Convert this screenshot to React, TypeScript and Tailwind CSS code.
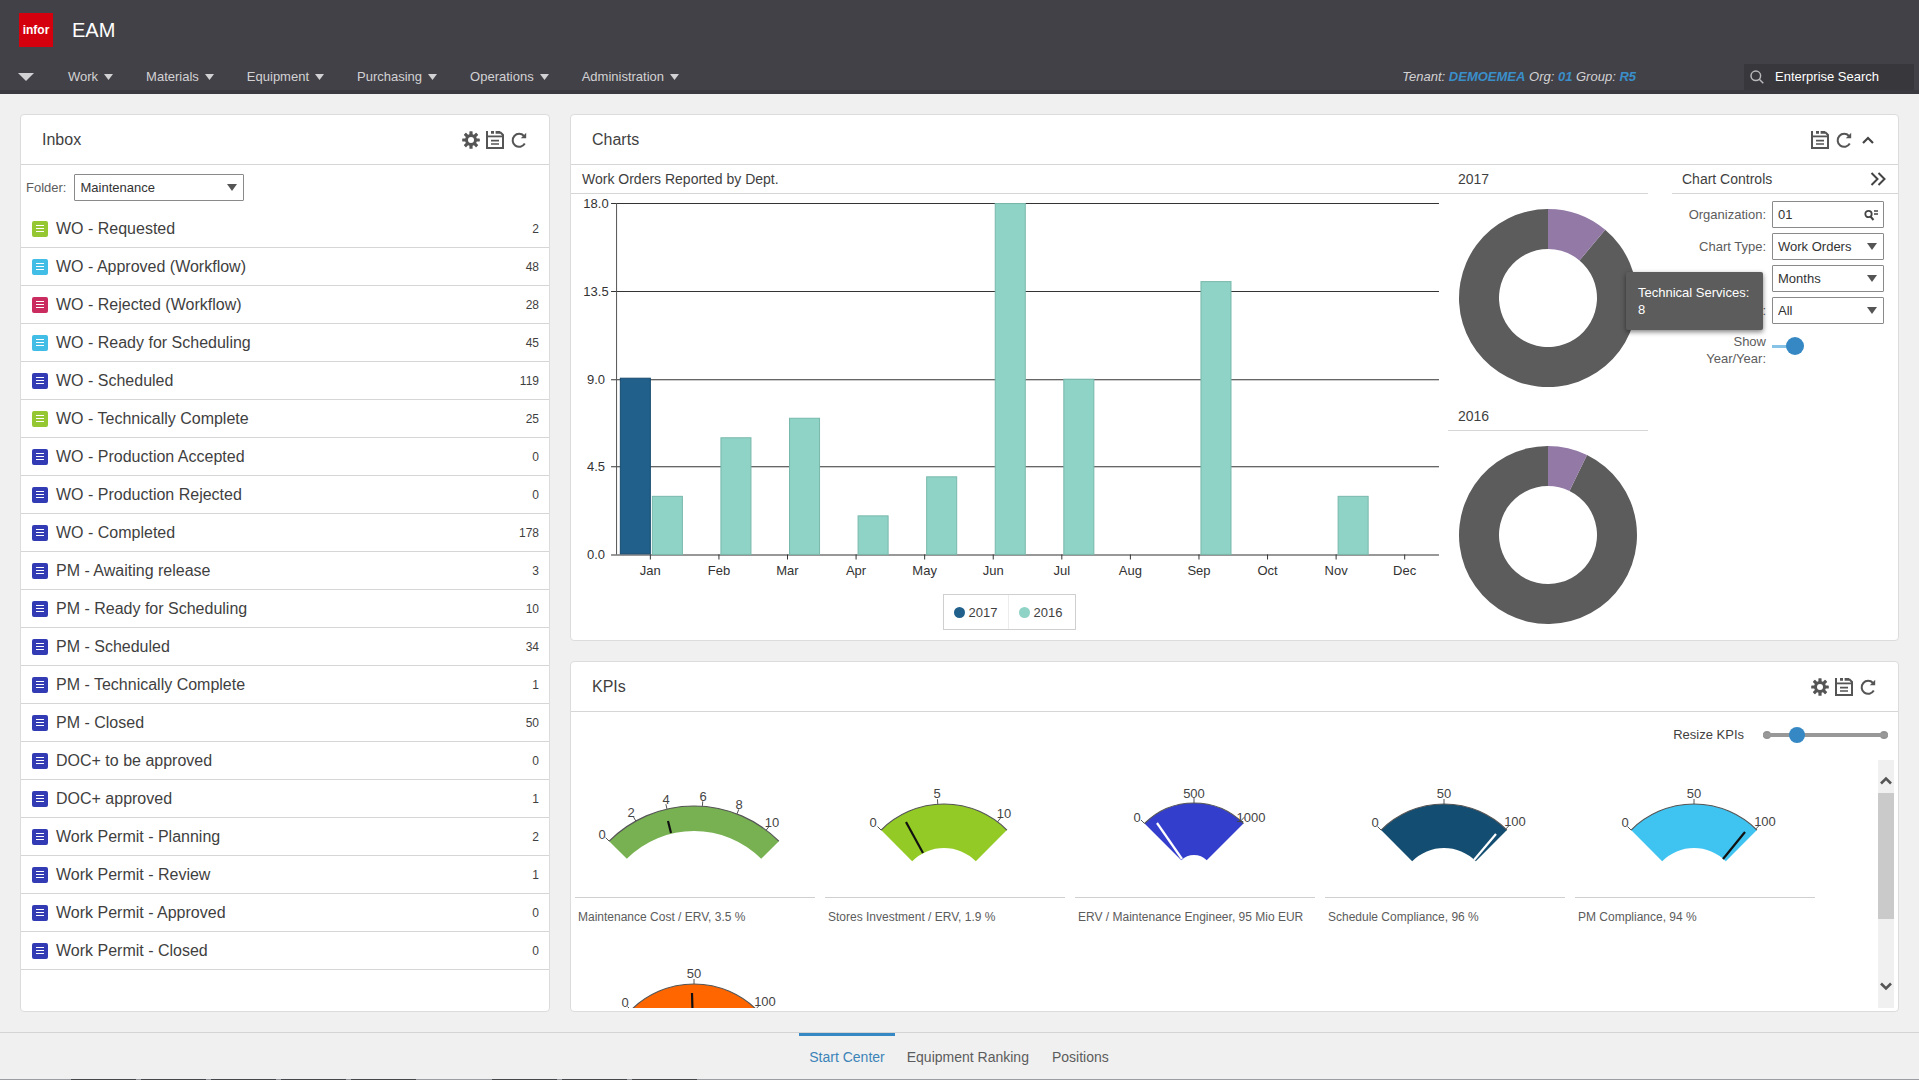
import { useState } from 'react';
import type { ReactNode } from 'react';

const menus = ['Work', 'Materials', 'Equipment', 'Purchasing', 'Operations', 'Administration'];

const inbox: { name: string; count: number; color: string }[] = [
  { name: 'WO - Requested', count: 2, color: 'bg-[#94c731]' },
  { name: 'WO - Approved (Workflow)', count: 48, color: 'bg-[#42bde5]' },
  { name: 'WO - Rejected (Workflow)', count: 28, color: 'bg-[#cb2c60]' },
  { name: 'WO - Ready for Scheduling', count: 45, color: 'bg-[#42bde5]' },
  { name: 'WO - Scheduled', count: 119, color: 'bg-[#323bb4]' },
  { name: 'WO - Technically Complete', count: 25, color: 'bg-[#94c731]' },
  { name: 'WO - Production Accepted', count: 0, color: 'bg-[#323bb4]' },
  { name: 'WO - Production Rejected', count: 0, color: 'bg-[#323bb4]' },
  { name: 'WO - Completed', count: 178, color: 'bg-[#323bb4]' },
  { name: 'PM - Awaiting release', count: 3, color: 'bg-[#323bb4]' },
  { name: 'PM - Ready for Scheduling', count: 10, color: 'bg-[#323bb4]' },
  { name: 'PM - Scheduled', count: 34, color: 'bg-[#323bb4]' },
  { name: 'PM - Technically Complete', count: 1, color: 'bg-[#323bb4]' },
  { name: 'PM - Closed', count: 50, color: 'bg-[#323bb4]' },
  { name: 'DOC+ to be approved', count: 0, color: 'bg-[#323bb4]' },
  { name: 'DOC+ approved', count: 1, color: 'bg-[#323bb4]' },
  { name: 'Work Permit - Planning', count: 2, color: 'bg-[#323bb4]' },
  { name: 'Work Permit - Review', count: 1, color: 'bg-[#323bb4]' },
  { name: 'Work Permit - Approved', count: 0, color: 'bg-[#323bb4]' },
  { name: 'Work Permit - Closed', count: 0, color: 'bg-[#323bb4]' },
];

const months = ['Jan', 'Feb', 'Mar', 'Apr', 'May', 'Jun', 'Jul', 'Aug', 'Sep', 'Oct', 'Nov', 'Dec'];
const orders2017 = [9, 0, 0, 0, 0, 0, 0, 0, 0, 0, 0, 0];
const orders2016 = [3, 6, 7, 2, 4, 18, 9, 0, 14, 0, 3, 0];

type Point = [number, number];

type Kpi = {
  label: string;
  fill: string;
  outer: number;
  inner: number;
  cy: number;
  needle: [number, number, number, number];
  needleColor: string;
  ticks: { text: string; angle: number; at: Point }[];
};

const percentTicks = [
  { text: '0', angle: -45, at: [50, 67] as Point },
  { text: '50', angle: 0, at: [119, 38] as Point },
  { text: '100', angle: 44, at: [190, 66] as Point },
];

const kpis: Kpi[] = [
  {
    label: 'Maintenance Cost / ERV, 3.5 %',
    fill: '#78b152',
    outer: 120,
    inner: 95,
    cy: 166,
    needle: [96, 73, 93, 61],
    needleColor: '#111',
    ticks: [
      { text: '0', angle: -45, at: [27, 79] },
      { text: '2', angle: -29, at: [56, 57] },
      { text: '4', angle: -13, at: [91, 44] },
      { text: '6', angle: 4, at: [128, 41] },
      { text: '8', angle: 21, at: [164, 49] },
      { text: '10', angle: 37, at: [197, 67] },
    ],
  },
  {
    label: 'Stores Investment / ERV, 1.9 %',
    fill: '#93ca25',
    outer: 89,
    inner: 45,
    cy: 133,
    needle: [98, 93, 81, 62],
    needleColor: '#111',
    ticks: [
      { text: '0', angle: -45, at: [48, 67] },
      { text: '5', angle: -4, at: [112, 38] },
      { text: '10', angle: 37, at: [179, 58] },
    ],
  },
  {
    label: 'ERV / Maintenance Engineer, 95 Mio EUR',
    fill: '#343ecd',
    outer: 70,
    inner: 18,
    cy: 113,
    needle: [107, 99, 82, 63],
    needleColor: '#fff',
    ticks: [
      { text: '0', angle: -45, at: [62, 62] },
      { text: '500', angle: 0, at: [119, 38] },
      { text: '1000', angle: 42, at: [176, 62] },
    ],
  },
  {
    label: 'Schedule Compliance, 96 %',
    fill: '#134d71',
    outer: 89,
    inner: 45,
    cy: 133,
    needle: [149, 100, 171, 74],
    needleColor: '#fff',
    ticks: percentTicks,
  },
  {
    label: 'PM Compliance, 94 %',
    fill: '#3fc4f1',
    outer: 89,
    inner: 45,
    cy: 133,
    needle: [148, 99, 170, 72],
    needleColor: '#111',
    ticks: percentTicks,
  },
  {
    label: '',
    fill: '#ff6600',
    outer: 89,
    inner: 45,
    cy: 133,
    needle: [118, 88, 117, 53],
    needleColor: '#111',
    ticks: percentTicks,
  },
];

/* Point at a clockwise angle from the vertical, on a circle round (cx, cy). */
function polar(cx: number, cy: number, r: number, degrees: number): Point {
  const a = (degrees * Math.PI) / 180;
  return [cx + r * Math.sin(a), cy - r * Math.cos(a)];
}

function ringSector(cx: number, cy: number, outer: number, inner: number, from: number, to: number) {
  const large = to - from > 180 ? 1 : 0;
  const [a, b, c, d] = [
    polar(cx, cy, outer, from),
    polar(cx, cy, outer, to),
    polar(cx, cy, inner, to),
    polar(cx, cy, inner, from),
  ];
  return `M${a} A${outer} ${outer} 0 ${large} 1 ${b} L${c} A${inner} ${inner} 0 ${large} 0 ${d} Z`;
}

function Caret({ className }: { className: string }) {
  return (
    <svg viewBox="0 0 10 6" preserveAspectRatio="none" className={className} aria-hidden="true">
      <path d="M0 0h10L5 6z" fill="currentColor" />
    </svg>
  );
}

function GearIcon() {
  return (
    <svg viewBox="0 0 18 18" className="size-[18px]" aria-hidden="true">
      {[0, 45, 90, 135].map((a) => (
        <rect key={a} x="7.4" y="0.2" width="3.2" height="17.6" rx="0.6" fill="#555" transform={`rotate(${a} 9 9)`} />
      ))}
      <circle cx="9" cy="9" r="6" fill="#555" />
      <circle cx="9" cy="9" r="3" fill="#fff" />
    </svg>
  );
}

function SaveIcon() {
  return (
    <svg viewBox="0 0 18 18" className="size-[18px]" fill="none" stroke="#555" strokeWidth="2" aria-hidden="true">
      <path d="M1 0V17h16V4L14 1" />
      <path d="M1 5.4h16" strokeWidth="1.8" />
      <path d="M5 1.4h3M9.6 1.4h4.4" strokeWidth="2.8" />
      <path d="M5 9.6h8M5 13h8" strokeWidth="1.7" />
    </svg>
  );
}

function RefreshIcon() {
  return (
    <svg viewBox="0 0 18 18" className="size-[18px]" fill="none" stroke="#555" strokeWidth="2" aria-hidden="true">
      <path d="M14.8 12.6A6.5 6.5 0 1 1 14 5" />
      <path d="M16.2 1.8v5.4h-5.4z" fill="#555" stroke="none" />
    </svg>
  );
}

function IconButton({ label, children }: { label: string; children: ReactNode }) {
  return (
    <button type="button" aria-label={label} className="flex size-6 items-center justify-center">
      {children}
    </button>
  );
}

function PanelHeader({ title, children }: { title: string; children: ReactNode }) {
  return (
    <header className="flex h-[50px] shrink-0 items-center justify-between border-b border-[#d6d6d6] pr-[18px] pl-[21px]">
      <h2 className="text-base">{title}</h2>
      <div className="flex items-center">{children}</div>
    </header>
  );
}

function Select({ id, value, options, label }: { id: string; value: string; options: string[]; label?: string }) {
  return (
    <div className="relative h-[27px] w-full">
      <select
        id={id}
        aria-label={label}
        defaultValue={value}
        className="h-full w-full appearance-none rounded-[1px] border border-[#8a8a8a] bg-white pr-5 pl-[5px] text-[13px] text-[#333]"
      >
        {options.map((o) => (
          <option key={o}>{o}</option>
        ))}
      </select>
      <Caret className="pointer-events-none absolute top-[10px] right-[7px] h-[7px] w-[10px] text-[#555]" />
    </div>
  );
}

function Inbox() {
  return (
    <section className="flex w-[530px] shrink-0 flex-col rounded-sm border border-[#dcdcdc] bg-white">
      <PanelHeader title="Inbox">
        <IconButton label="Settings"><GearIcon /></IconButton>
        <IconButton label="Save"><SaveIcon /></IconButton>
        <IconButton label="Refresh"><RefreshIcon /></IconButton>
      </PanelHeader>
      <div className="flex items-center gap-2 pt-[9px] pb-[9px] pl-[5px]">
        <label htmlFor="folder" className="text-[13px] text-[#5c5c5c]">Folder:</label>
        <div className="w-[170px]">
          <Select id="folder" value="Maintenance" options={['Maintenance']} />
        </div>
      </div>
      <ul>
        {inbox.map((row) => (
          <li key={row.name} className="border-b border-[#d6d6d6]">
            <a href="#" className="flex h-[37px] items-center gap-2 pr-[10px] pl-[11px]">
              <span className={`flex size-4 flex-col items-center justify-center gap-[2px] rounded-[2px] ${row.color}`}>
                <span className="h-px w-2 bg-white" />
                <span className="h-px w-2 bg-white" />
                <span className="h-px w-2 bg-white" />
              </span>
              <span className="flex-1">{row.name}</span>
              <span className="text-xs">{row.count}</span>
            </a>
          </li>
        ))}
      </ul>
    </section>
  );
}

function BarChart() {
  const left = 45;
  const right = 867;
  const base = 360;
  const unit = 351 / 18;
  const step = (right - left) / 12;
  return (
    <svg viewBox="0 0 876 393" className="w-full" role="img" aria-label="Work orders reported by department" fontSize="13" fill="#333">
      {[18, 13.5, 9, 4.5, 0].map((v) => {
        const y = Math.round(base - v * unit) + 0.5;
        return (
          <g key={v}>
            <line x1={left - 5} x2={right} y1={y} y2={y} stroke="#333" />
            <text x="25" y={y + 4} textAnchor="middle">{v.toFixed(1)}</text>
          </g>
        );
      })}
      <line x1={left + 0.5} x2={left + 0.5} y1="9" y2={base} stroke="#555" />
      {months.map((m, i) => {
        const x = left + step * (i + 0.5);
        const before = orders2017[i] * unit;
        const after = orders2016[i] * unit;
        return (
          <g key={m}>
            <line x1={x} x2={x} y1={base} y2={base + 5} stroke="#333" />
            {before > 0 && (
              <rect x={x - 30} y={base - before - 0.5} width="30" height={before} fill="#20608b" stroke="#174a6d" />
            )}
            {after > 0 && (
              <rect x={x + 2} y={base - after + 0.5} width="30" height={after - 0.5} fill="#8fd2c6" stroke="#79b8ac" />
            )}
            <text x={x} y={base + 21} textAnchor="middle">{m}</text>
          </g>
        );
      })}
    </svg>
  );
}

function Donut({ year, angle }: { year: string; angle: number }) {
  return (
    <div className="h-[237px]">
      <h3 className="h-[29px] border-b border-[#d6d6d6] pl-[10px] text-sm leading-7">{year}</h3>
      <svg viewBox="0 0 200 208" className="w-full" role="img" aria-label={`Work orders ${year}`}>
        <path d={ringSector(100, 104, 89, 49, angle, 360)} fill="#5c5c5c" />
        <path d={ringSector(100, 104, 89, 49, 0, angle)} fill="#9279a6" />
      </svg>
    </div>
  );
}

function ControlRow({ id, label, children }: { id: string; label?: string; children: ReactNode }) {
  return (
    <div className="flex items-center gap-[6px]">
      {label ? <label htmlFor={id} className="flex-1 text-right">{label}</label> : <span className="flex-1" />}
      <div className="w-[112px]">{children}</div>
    </div>
  );
}

function ChartControls() {
  return (
    <div className="w-[226px] shrink-0">
      <div className="flex h-[29px] items-center justify-between border-b border-[#d6d6d6] pr-[12px] pl-[10px]">
        <h3 className="text-sm">Chart Controls</h3>
        <button type="button" aria-label="Collapse controls">
          <svg viewBox="0 0 16 14" className="h-[14px] w-4" fill="none" stroke="#444" strokeWidth="2" aria-hidden="true">
            <path d="M1.5 1l6 6-6 6M8.5 1l6 6-6 6" />
          </svg>
        </button>
      </div>
      <div className="flex flex-col gap-[5px] pt-[7px] pr-[14px] text-[13px] text-[#5c5c5c]">
        <ControlRow id="organization" label="Organization:">
          <div className="relative h-[27px]">
            <input
              id="organization"
              defaultValue="01"
              className="h-full w-full rounded-[1px] border border-[#8a8a8a] bg-white pr-5 pl-[5px] text-[#333]"
            />
            <svg viewBox="0 0 14 12" className="absolute top-[8px] right-[6px] h-3 w-[14px]" fill="none" stroke="#444" aria-hidden="true">
              <circle cx="4.5" cy="5" r="3.2" strokeWidth="1.8" />
              <path d="M6.5 7.5l3 3.5" strokeWidth="2" />
              <path d="M10 2h4M10 5h4" strokeWidth="1.4" />
            </svg>
          </div>
        </ControlRow>
        <ControlRow id="chart-type" label="Chart Type:">
          <Select id="chart-type" value="Work Orders" options={['Work Orders']} />
        </ControlRow>
        <ControlRow id="period">
          <Select id="period" label="Period" value="Months" options={['Months']} />
        </ControlRow>
        <ControlRow id="department" label=":">
          <Select id="department" label="Department" value="All" options={['All']} />
        </ControlRow>
        <div className="flex items-center gap-[6px] pt-1">
          <label htmlFor="year" className="flex-1 text-right leading-[17px]">
            Show
            <br />
            Year/Year:
          </label>
          <div className="w-[112px] pb-2">
            <input
              id="year"
              type="checkbox"
              defaultChecked
              className="relative block h-[18px] w-8 appearance-none before:absolute before:top-2 before:left-0 before:h-[3px] before:w-5 before:bg-[#86c3e6] after:absolute after:top-0 after:left-[14px] after:size-[18px] after:rounded-full after:bg-[#3588c4]"
            />
          </div>
        </div>
      </div>
    </div>
  );
}

function Charts() {
  return (
    <section className="relative flex h-[527px] flex-col rounded-sm border border-[#dcdcdc] bg-white">
      <PanelHeader title="Charts">
        <IconButton label="Save"><SaveIcon /></IconButton>
        <IconButton label="Refresh"><RefreshIcon /></IconButton>
        <IconButton label="Collapse">
          <svg viewBox="0 0 14 10" className="h-[10px] w-[14px]" fill="none" stroke="#444" strokeWidth="2.2" aria-hidden="true">
            <path d="M2 8l5-5 5 5" />
          </svg>
        </IconButton>
      </PanelHeader>
      <div className="flex flex-1">
        <div className="flex min-w-0 flex-1 flex-col">
          <h3 className="h-[29px] border-b border-[#d6d6d6] pl-[11px] text-sm leading-7">Work Orders Reported by Dept.</h3>
          <BarChart />
          <div className="mt-[7px] flex h-9 items-center self-center border border-[#cfcfcf] text-[13px]">
            <span className="flex h-full items-center gap-1 border-r border-[#ececec] px-[10px]">
              <span className="size-[11px] rounded-full bg-[#20608b]" />2017
            </span>
            <span className="flex h-full items-center gap-1 pr-[13px] pl-[10px]">
              <span className="size-[11px] rounded-full bg-[#8fd2c6]" />2016
            </span>
          </div>
        </div>
        <div className="relative mr-6 w-[200px] shrink-0">
          <Donut year="2017" angle={40} />
          <Donut year="2016" angle={26} />
          <div role="tooltip" className="absolute top-[107px] left-[178px] z-10 h-[58px] w-[137px] rounded-[2px] bg-[#5c5c5c] pt-3 pl-3 text-[13px] leading-[17px] text-white shadow-[0_2px_5px_rgba(0,0,0,0.5)]">
            Technical Services:
            <br />8
          </div>
        </div>
        <ChartControls />
      </div>
    </section>
  );
}

function Gauge({ kpi }: { kpi: Kpi }) {
  const cx = 119;
  const start = polar(cx, kpi.cy, kpi.outer, -45);
  const end = polar(cx, kpi.cy, kpi.outer, 45);
  const [x1, y1, x2, y2] = kpi.needle;
  return (
    <figure className="h-[180px] w-60 shrink-0">
      <svg viewBox="0 0 240 137" className="h-[137px] w-60" fontSize="13" fill="#444" aria-hidden="true">
        <path d={ringSector(cx, kpi.cy, kpi.outer, kpi.inner, -45, 45)} fill={kpi.fill} />
        <path d={`M${start} A${kpi.outer} ${kpi.outer} 0 0 1 ${end}`} fill="none" stroke="#555" strokeWidth="1.2" />
        {kpi.ticks.map((t) => {
          const a = polar(cx, kpi.cy, kpi.outer, t.angle);
          const b = polar(cx, kpi.cy, kpi.outer + 5, t.angle);
          return (
            <g key={t.text}>
              <line x1={a[0]} y1={a[1]} x2={b[0]} y2={b[1]} stroke="#555" />
              <text x={t.at[0]} y={t.at[1]} textAnchor="middle">{t.text}</text>
            </g>
          );
        })}
        <line x1={x1} y1={y1} x2={x2} y2={y2} stroke={kpi.needleColor} strokeWidth="2.2" />
      </svg>
      <figcaption className="border-t border-[#d0d0d0] pt-[11px] pl-[3px] text-xs leading-4 text-[#5c5c5c]">{kpi.label}</figcaption>
    </figure>
  );
}

function Kpis() {
  const [size, setSize] = useState(24);
  return (
    <section className="flex min-h-0 flex-1 flex-col rounded-sm border border-[#dcdcdc] bg-white">
      <PanelHeader title="KPIs">
        <IconButton label="Settings"><GearIcon /></IconButton>
        <IconButton label="Save"><SaveIcon /></IconButton>
        <IconButton label="Refresh"><RefreshIcon /></IconButton>
      </PanelHeader>
      <div className="mb-[2px] flex h-[46px] shrink-0 items-center justify-end gap-[19px] pr-[10px] text-[13px]">
        <label htmlFor="resize">Resize KPIs</label>
        <div className="relative flex h-4 w-[125px] items-center">
          <span className="absolute left-0 size-2 rounded-full bg-[#929292]" />
          <span className="absolute right-0 size-2 rounded-full bg-[#929292]" />
          <input
            id="resize"
            type="range"
            value={size}
            onChange={(e) => setSize(Number(e.target.value))}
            className="relative h-1 w-full appearance-none bg-[#989898] [&::-webkit-slider-thumb]:size-4 [&::-webkit-slider-thumb]:appearance-none [&::-webkit-slider-thumb]:rounded-full [&::-webkit-slider-thumb]:bg-[#3588c4]"
          />
        </div>
      </div>
      <div className="mb-[3px] flex min-h-0 flex-1 pr-1 pl-1">
        <div className="flex min-w-0 flex-1 flex-wrap content-start gap-x-[10px] overflow-hidden">
          {kpis.map((k) => (
            <Gauge key={k.fill} kpi={k} />
          ))}
        </div>
        <div className="flex w-4 shrink-0 flex-col items-center bg-[#f0f0f0] pt-4">
          <svg viewBox="0 0 12 9" className="h-[9px] w-3" fill="none" stroke="#555" strokeWidth="2.6" aria-hidden="true">
            <path d="M1 7.5l5-5 5 5" />
          </svg>
          <div className="mt-2 h-[126px] w-full bg-[#cacaca]" />
          <svg viewBox="0 0 12 9" className="mt-auto mb-[17px] h-[9px] w-3" fill="none" stroke="#555" strokeWidth="2.6" aria-hidden="true">
            <path d="M1 1.5l5 5 5-5" />
          </svg>
        </div>
      </div>
    </section>
  );
}

export default function App() {
  return (
    <div className="flex h-screen flex-col overflow-hidden bg-[#f0f0f0] font-['Liberation_Sans',Arial,sans-serif] text-base text-[#3f3f3f]">
      <header className="flex h-[94px] shrink-0 flex-col border-b-4 border-[#3a393f] bg-[#424147] text-[#d2d2d4]">
        <div className="flex h-[60px] items-center gap-[19px] pl-[19px]">
          <div className="flex size-[34px] items-center justify-center bg-[#d5000e] text-xs font-bold text-white">infor</div>
          <h1 className="text-xl text-white">EAM</h1>
        </div>
        <div className="flex h-[30px] items-center pt-[3px] text-[13px]">
          <button type="button" aria-label="Open menu" className="ml-[18px]">
            <Caret className="h-2 w-4" />
          </button>
          <nav className="ml-[34px] flex flex-1 gap-[33px]">
            {menus.map((m) => (
              <button key={m} type="button" className="flex items-center gap-[6px]">
                {m}
                <Caret className="h-[6px] w-[9px]" />
              </button>
            ))}
          </nav>
          <p className="mr-[108px] text-[13px] italic">
            Tenant: <b className="text-[#3a8fca]">DEMOEMEA</b> Org: <b className="text-[#3a8fca]">01</b> Group:{' '}
            <b className="text-[#3a8fca]">R5</b>
          </p>
          <label className="mr-[5px] flex h-[26px] w-[170px] items-center gap-[11px] bg-[#38373c] pl-[6px]">
            <svg viewBox="0 0 14 14" className="size-[14px] shrink-0" fill="none" stroke="#b8b8ba" strokeWidth="1.5" aria-hidden="true">
              <circle cx="5.8" cy="5.8" r="4.8" />
              <path d="M9.3 9.3l4 4" />
            </svg>
            <input
              type="search"
              aria-label="Enterprise Search"
              placeholder="Enterprise Search"
              className="w-full min-w-0 bg-transparent text-[13px] placeholder:text-white"
            />
          </label>
        </div>
      </header>

      <main className="flex min-h-0 flex-1 gap-5 px-5 pt-5 pb-5">
        <Inbox />
        <div className="flex min-w-0 flex-1 flex-col gap-5">
          <Charts />
          <Kpis />
        </div>
      </main>

      <footer className="shrink-0 border-t border-[#d4d4d4]">
        <nav className="flex h-[46px] justify-center text-sm text-[#5c5c5c]">
          <a href="#" aria-current="page" className="border-t-[3px] border-[#3588c4] px-[10px] pt-[11px] text-[#3c84b8]">Start Center</a>
          <a href="#" className="px-3 pt-[14px]">Equipment Ranking</a>
          <a href="#" className="px-[11px] pt-[14px]">Positions</a>
        </nav>
        <div className="flex h-px gap-[5px] bg-[#9a9da1] pl-[71px]">
          {['w-[65px]', 'w-[65px]', 'w-[65px]', 'w-[65px]', 'w-[65px]', 'ml-[71px] w-[65px]', 'w-[65px]', 'w-[65px]'].map((c, i) => (
            <span key={i} className={`shrink-0 bg-[#45474b] ${c}`} />
          ))}
        </div>
      </footer>
    </div>
  );
}
